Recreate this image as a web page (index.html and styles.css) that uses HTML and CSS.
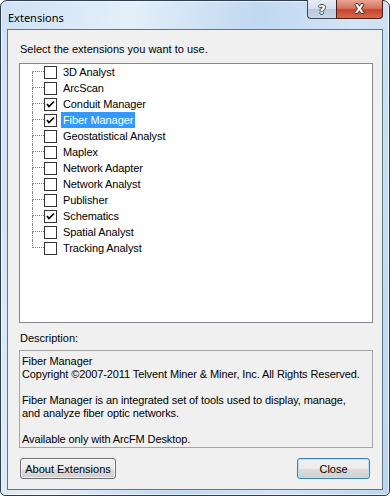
FILE: index.html
```html
<!DOCTYPE html>
<html lang="en">

<head>
    <meta charset="UTF-8">
    <title>Extensions</title>
    <link rel="stylesheet" href="styles.css">
</head>

<body>
    <div class="window">
        <!-- Barra de titulo -->
        <div class="titlebar">
            <span class="title">Extensions</span>
            <div class="caption-buttons">
                <span class="cap-btn help">?</span>
                <span class="cap-btn close">X</span>
            </div>
        </div>

        <div class="client">
            <p class="label first">Select the extensions you want to use.</p>

            <ul class="tree">
                <li class="row top"><span class="branch"><i class="up"></i><i class="down"></i></span><span class="check"></span><span class="name">3D Analyst</span></li>
                <li class="row"><span class="branch"><i class="up"></i><i class="down"></i></span><span class="check"></span><span class="name">ArcScan</span></li>
                <li class="row"><span class="branch"><i class="up"></i><i class="down"></i></span><span class="check on"></span><span class="name">Conduit Manager</span></li>
                <li class="row"><span class="branch"><i class="up"></i><i class="down"></i></span><span class="check on"></span><span class="name selected">Fiber Manager</span></li>
                <li class="row"><span class="branch"><i class="up"></i><i class="down"></i></span><span class="check"></span><span class="name">Geostatistical Analyst</span></li>
                <li class="row"><span class="branch"><i class="up"></i><i class="down"></i></span><span class="check"></span><span class="name">Maplex</span></li>
                <li class="row"><span class="branch"><i class="up"></i><i class="down"></i></span><span class="check"></span><span class="name">Network Adapter</span></li>
                <li class="row"><span class="branch"><i class="up"></i><i class="down"></i></span><span class="check"></span><span class="name">Network Analyst</span></li>
                <li class="row"><span class="branch"><i class="up"></i><i class="down"></i></span><span class="check"></span><span class="name">Publisher</span></li>
                <li class="row"><span class="branch"><i class="up"></i><i class="down"></i></span><span class="check on"></span><span class="name">Schematics</span></li>
                <li class="row"><span class="branch"><i class="up"></i><i class="down"></i></span><span class="check"></span><span class="name">Spatial Analyst</span></li>
                <li class="row last"><span class="branch"><i class="up"></i><i class="down"></i></span><span class="check"></span><span class="name">Tracking Analyst</span></li>
            </ul>

            <p class="label desc-label">Description:</p>

            <div class="description">
                <p>Fiber Manager<br>Copyright &copy;2007-2011 Telvent Miner &amp; Miner, Inc. All Rights Reserved.</p>
                <p>Fiber Manager is an integrated set of tools used to display, manage,<br>and analyze fiber optic networks.</p>
                <p>Available only with ArcFM Desktop.</p>
            </div>

            <div class="buttons">
                <button class="btn about">About Extensions</button>
                <button class="btn default">Close</button>
            </div>
        </div>
    </div>
</body>

</html>
```

FILE: styles.css
```css
body {
    margin: 0;
    padding: 0;
    background-color: #ffffff;
    font-family: "Liberation Sans", Arial, sans-serif;
    font-size: 11px;
    color: #000;
}

.window {
    width: 390px;
    height: 496px;
    box-sizing: border-box;
    border: 1px solid #2e3d4f;
    border-radius: 7px 7px 5px 5px;
    padding: 0 6px 5px 6px;
    background: linear-gradient(100deg, #cfe2f5 0%, #e4eff9 28%, #c0d8f1 55%, #d3e5f6 75%, #bcd5ef 100%);
    box-shadow: inset 0 0 0 1px rgba(255, 255, 255, 0.6);
}

/* Barra de titulo */
.titlebar {
    height: 28px;
    display: flex;
    justify-content: space-between;
    align-items: flex-start;
}

.title {
    font-family: "Noto Sans", sans-serif;
    font-size: 11px;
    line-height: 16px;
    margin-top: 9px;
    padding-left: 1px;
    color: #000;
}

.caption-buttons {
    display: flex;
    margin-top: -1px;
}

.cap-btn {
    height: 19px;
    box-sizing: border-box;
    display: flex;
    justify-content: center;
    align-items: center;
    font-family: "DejaVu Sans", sans-serif;
    font-weight: bold;
    color: #fff;
    border: 1px solid #3c4b5c;
    border-top: none;
}

.cap-btn.help {
    width: 29px;
    font-size: 13px;
    border-radius: 0 0 0 4px;
    border-right: none;
    background: linear-gradient(#e6edf5 0%, #d4dfeb 48%, #b9c9db 52%, #cad8e7 100%);
    text-shadow: 1px 0 #3e4a58, -1px 0 #3e4a58, 0 1px #3e4a58, 0 -1px #3e4a58;
}

.cap-btn.close {
    width: 47px;
    font-size: 12px;
    border-color: #4a1b12;
    border-radius: 0 0 4px 0;
    background: linear-gradient(#e8a593 0%, #d6745f 45%, #c5432b 55%, #d46a51 100%);
    text-shadow: 1px 0 #51221a, -1px 0 #51221a, 0 1px #51221a, 0 -1px #51221a;
}

/* Area cliente */
.client {
    height: 461px;
    box-sizing: border-box;
    border: 1px solid #61748a;
    background-color: #f0f0f0;
    padding: 13px 9px 0 11px;
}

.label {
    margin: 0;
    line-height: 13px;
    padding-left: 1px;
}

.tree {
    list-style: none;
    margin: 7px 0 0 0;
    padding: 0 0 0 12px;
    height: 260px;
    box-sizing: border-box;
    border: 1px solid #828790;
    background-color: #fff;
}

.row {
    height: 16px;
    display: flex;
    align-items: center;
}

.branch {
    width: 12px;
    height: 16px;
    display: flex;
    flex-direction: column;
}

.branch i {
    display: block;
    height: 8px;
    box-sizing: border-box;
    border-left: 1px dotted #808080;
}

.branch .up {
    border-bottom: 1px dotted #808080;
}

.row.top .up {
    border-left-color: transparent;
}

.row.last .down {
    border-left-color: transparent;
}

.check {
    width: 13px;
    height: 13px;
    box-sizing: border-box;
    border: 1px solid #333;
    background-color: #fff;
    margin-right: 4px;
}

.check.on {
    background-image: url("data:image/svg+xml,%3Csvg xmlns='http://www.w3.org/2000/svg' width='11' height='11'%3E%3Cpath d='M2 5 L4 7.5 L9 2.5' fill='none' stroke='%23000' stroke-width='1.7'/%3E%3C/svg%3E");
}

.name {
    line-height: 16px;
    padding: 0 2px;
    letter-spacing: -0.1px;
}

.name.selected {
    background-color: #3399ff;
    color: #fff;
}

.desc-label {
    margin-top: 9px;
}

.description {
    margin-top: 5px;
    height: 98px;
    box-sizing: border-box;
    border: 1px solid #a5a5a5;
    padding: 4px 2px 0 2px;
    line-height: 13px;
    letter-spacing: -0.1px;
}

.description p {
    margin: 0 0 13px 0;
}

.buttons {
    display: flex;
    justify-content: space-between;
    margin-top: 10px;
    padding: 0 3px 0 1px;
}

.btn {
    height: 21px;
    font-family: "Liberation Sans", Arial, sans-serif;
    font-size: 11px;
    color: #000;
    border: 1px solid #707070;
    border-radius: 3px;
    background: linear-gradient(#f2f2f2 0%, #ebebeb 50%, #dddddd 51%, #cfcfcf 100%);
    box-shadow: inset 0 0 0 1px rgba(255, 255, 255, 0.7);
    padding: 0;
}

.btn.about {
    width: 96px;
}

.btn.default {
    width: 73px;
    border-color: #3c7fb1;
    box-shadow: inset 0 0 0 1px #b7e2f9;
}
```
